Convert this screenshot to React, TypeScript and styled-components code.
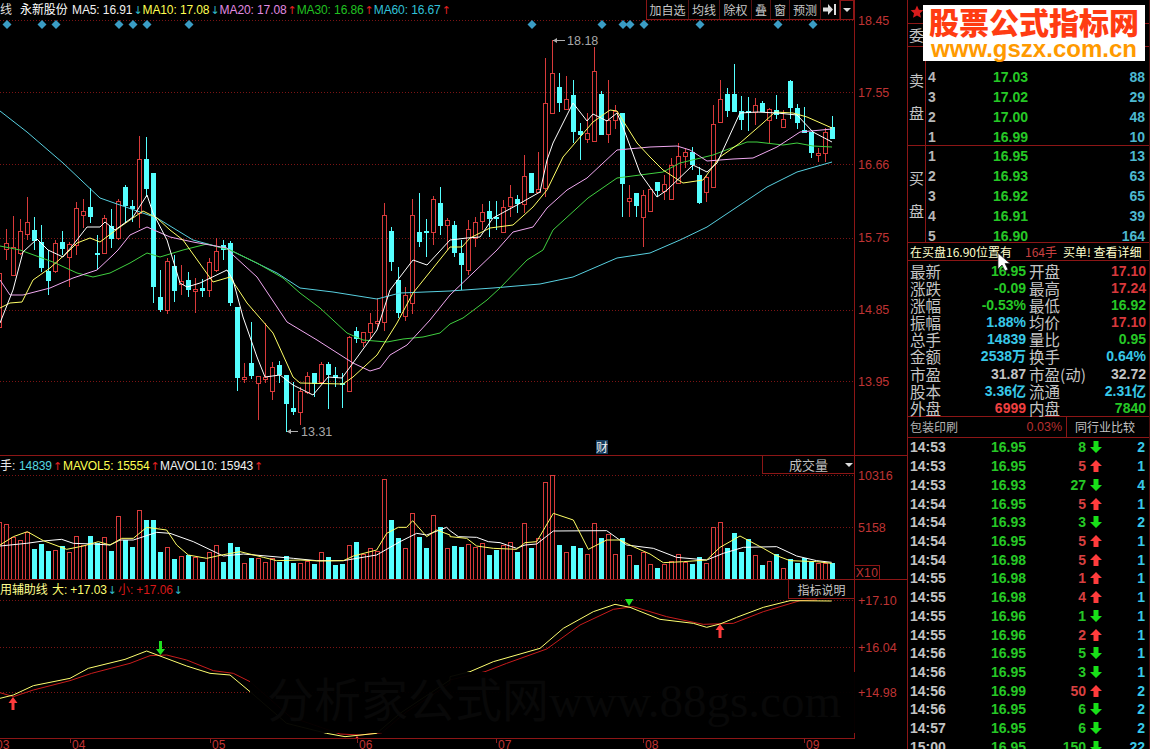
import React from "react";
import styled, { createGlobalStyle } from "styled-components";

const CJK = `"Noto Sans CJK SC", "Liberation Sans", sans-serif`;
const LATIN = `"Liberation Sans", "Noto Sans CJK SC", sans-serif`;
const LINE = "#8c1616";
const RED = "#d8383c";
const GREEN = "#26c826";
const CYAN = "#38c8e8";
const TEAL = "#4db8d0";
const GREY = "#c4c4c4";
const CANDLE_CYAN = "#55ffff";
const CANDLE_RED = "#d83a3a";

type Kind = "r" | "c";
type Candle = [Kind, number, number, number, number];

/* index -1 … 118, pixel y of high, body top, body bottom, low */
const candles: Candle[] = [
  ["r", 250, 273, 327, 330], ["r", 229, 243, 249, 260], ["r", 216, 247, 275, 276], ["r", 219, 231, 253, 255], ["r", 197, 222, 234, 240],
  ["c", 217, 230, 241, 250], ["c", 225, 242, 268, 272], ["c", 250, 271, 281, 295], ["r", 240, 243, 271, 273], ["c", 231, 242, 249, 255],
  ["r", 242, 244, 257, 287], ["r", 202, 208, 245, 255], ["r", 199, 211, 215, 228], ["c", 188, 207, 217, 223], ["c", 235, 253, 254, 270],
  ["r", 215, 218, 253, 254], ["c", 209, 226, 239, 248], ["r", 199, 201, 238, 240], ["c", 185, 187, 206, 223], ["c", 200, 206, 209, 222],
  ["r", 136, 159, 213, 228], ["c", 137, 159, 189, 197], ["c", 173, 173, 287, 303], ["c", 270, 297, 310, 312], ["r", 258, 261, 310, 314],
  ["c", 255, 266, 291, 302], ["r", 265, 281, 284, 295], ["c", 272, 280, 290, 297], ["r", 278, 289, 291, 313], ["c", 279, 288, 291, 297],
  ["r", 258, 262, 290, 297], ["r", 238, 251, 270, 272], ["c", 240, 245, 250, 260], ["c", 241, 243, 303, 306], ["c", 307, 307, 378, 391],
  ["r", 363, 377, 379, 383], ["c", 322, 363, 376, 379], ["r", 376, 376, 383, 420], ["r", 323, 377, 379, 383], ["r", 362, 367, 391, 400],
  ["c", 361, 365, 375, 383], ["c", 375, 375, 404, 432], ["c", 382, 408, 412, 415], ["r", 387, 391, 412, 425], ["r", 372, 376, 392, 394],
  ["c", 373, 373, 384, 397], ["r", 362, 364, 382, 384], ["c", 362, 364, 375, 409], ["c", 367, 375, 378, 387], ["c", 373, 383, 385, 408],
  ["r", 336, 337, 391, 391], ["c", 327, 331, 339, 343], ["r", 332, 332, 342, 347], ["r", 313, 323, 332, 339], ["r", 298, 321, 323, 328],
  ["r", 203, 215, 322, 331], ["c", 227, 231, 262, 271], ["c", 267, 280, 313, 318], ["r", 287, 295, 316, 321], ["r", 199, 215, 303, 314],
  ["c", 193, 232, 242, 247], ["c", 219, 231, 233, 257], ["r", 196, 199, 232, 245], ["c", 187, 203, 226, 235], ["r", 218, 220, 225, 250],
  ["c", 221, 225, 253, 257], ["c", 240, 253, 265, 290], ["r", 220, 229, 270, 275], ["r", 217, 222, 238, 247], ["r", 204, 212, 221, 230],
  ["c", 201, 211, 219, 237], ["c", 201, 217, 219, 230], ["r", 200, 207, 232, 232], ["r", 185, 197, 206, 217], ["c", 195, 199, 204, 213],
  ["r", 155, 176, 204, 213], ["c", 173, 173, 193, 193], ["r", 152, 189, 192, 192], ["r", 58, 103, 188, 197], ["r", 40, 73, 113, 113],
  ["c", 73, 87, 103, 112], ["r", 76, 99, 109, 109], ["c", 80, 95, 132, 143], ["c", 123, 131, 135, 160], ["r", 113, 133, 139, 143],
  ["r", 47, 71, 141, 141], ["c", 91, 94, 135, 135], ["r", 80, 120, 134, 143], ["r", 105, 111, 120, 129], ["c", 113, 113, 184, 217],
  ["r", 185, 198, 201, 217], ["c", 193, 193, 206, 217], ["r", 190, 195, 217, 247], ["r", 188, 189, 211, 211], ["c", 182, 182, 191, 197],
  ["r", 175, 184, 191, 200], ["r", 158, 165, 199, 199], ["r", 143, 156, 183, 183], ["r", 148, 152, 156, 168], ["c", 147, 152, 165, 170],
  ["c", 167, 175, 203, 204], ["r", 175, 177, 192, 202], ["r", 105, 124, 187, 187], ["r", 80, 99, 122, 122], ["c", 88, 94, 111, 117],
  ["c", 64, 94, 112, 112], ["c", 96, 111, 120, 130], ["c", 97, 111, 113, 131], ["r", 98, 105, 112, 125], ["c", 101, 103, 112, 112],
  ["r", 108, 109, 120, 143], ["c", 95, 110, 115, 119], ["r", 110, 119, 127, 127], ["c", 80, 81, 108, 119], ["c", 104, 108, 123, 129],
  ["c", 107, 130, 133, 133], ["c", 132, 132, 153, 158], ["r", 148, 153, 155, 162], ["r", 128, 132, 153, 162], ["c", 116, 127, 139, 139],
];

const volumeTops: number[] = [
  157, 163, 200, 210, 187, 237, 222, 243, 241, 228, 246, 199, 225, 198, 218, 202, 243, 139, 210, 231,
  121, 150, 150, 246, 232, 267, 259, 255, 262, 276, 247, 226, 276, 219, 231, 280, 264, 264, 276, 265,
  276, 258, 279, 280, 274, 282, 247, 261, 285, 282, 226, 216, 253, 235, 243, 28, 150, 204, 235, 129,
  201, 234, 136, 171, 235, 228, 231, 222, 230, 220, 255, 240, 224, 217, 245, 160, 234, 205, 37, 15,
  225, 246, 228, 234, 252, 160, 204, 192, 252, 204, 255, 285, 246, 282, 294, 282, 272, 253, 276, 282,
  261, 279, 172, 157, 234, 189, 246, 208, 255, 285, 273, 252, 294, 267, 279, 264, 276, 279, 279, 279,
];

const pts = (list: number[][]) => list.map(([x, y]) => `${x},${y}`).join(" ");
const zoomed = (ox: number, oy: number, list: number[][]) => list.map(([x, y]) => [ox + x / 3, oy + y / 3]);

const ma5 = [[0,323],[13,290],[23,252],[37,239],[48,250],[63,257],[73,245],[87,227],[100,227],[105,222],[115,230],[133,217],[147,195],[153,213],[167,240],[170,250],[180,283],[187,287],[200,283],[227,270],[233,280],[243,317],[257,357],[265,377],[280,375],[293,385],[313,395],[328,377],[342,378],[353,363],[377,330],[390,290],[413,260],[427,265],[450,240],[467,238],[480,237],[493,218],[517,205],[540,192],[547,160],[553,143],[573,103],[587,121],[593,114],[607,121],[617,113],[623,127],[640,173],[657,197],[667,190],[693,165],[707,172],[717,163],[740,113],[757,112],[777,113],[797,115],[813,132],[832,142]];
const ma10 = [[0,308],[10,303],[22,302],[33,280],[50,268],[70,250],[77,243],[90,238],[100,242],[120,227],[143,211],[157,218],[170,230],[183,240],[213,282],[230,277],[247,303],[273,333],[293,377],[300,383],[343,384],[353,377],[377,355],[397,323],[413,293],[450,247],[462,247],[470,238],[490,228],[513,225],[533,207],[547,190],[563,157],[593,122],[610,110],[617,111],[637,143],[650,157],[663,170],[683,183],[703,180],[720,157],[740,143],[763,123],[775,112],[793,113],[807,117],[832,128]];
const ma20 = [[0,280],[10,295],[23,295],[50,288],[73,278],[97,270],[113,255],[118,250],[130,235],[147,227],[170,237],[193,242],[227,248],[233,255],[257,277],[287,322],[317,340],[353,363],[370,371],[380,368],[390,355],[407,345],[430,320],[450,295],[497,250],[513,232],[533,227],[547,208],[567,190],[587,178],[617,150],[650,147],[677,146],[690,150],[707,161],[733,159],[753,158],[777,147],[800,132],[832,129]];
const ma30 = [[0,246],[20,250],[53,262],[77,273],[93,277],[110,273],[130,263],[147,253],[160,257],[183,250],[207,244],[230,250],[257,263],[283,278],[300,293],[320,308],[347,333],[363,340],[387,342],[403,339],[423,337],[440,333],[450,324],[463,318],[487,300],[500,288],[527,260],[543,250],[553,230],[588,198],[617,178],[663,172],[680,163],[713,155],[747,142],[757,142],[783,145],[797,143],[813,146],[832,147]];
const ma60 = [[0,111],[27,132],[63,163],[100,198],[157,218],[193,240],[230,250],[277,273],[300,288],[333,292],[377,299],[400,293],[450,291],[493,288],[540,284],[573,277],[617,258],[650,253],[680,240],[707,227],[767,187],[797,172],[832,162]];

const volYellow = [
  ...zoomed(0, 470, [[0,225],[40,200],[82,185],[130,212],[200,238],[250,228],[295,215],[330,225],[365,205],[400,205],[440,172],[500,180],[530,225],[565,255],[620,265],[665,255],[720,245],[790,262],[830,272],[900,270],[960,273],[1030,272],[1060,258],[1130,240],[1160,190],[1195,172],[1220,172],[1238,152],[1280,200],[1310,180],[1350,195]]),
  ...zoomed(450, 470, [[0,200],[50,205],[80,228],[130,235],[200,238],[225,218],[260,215],[310,130],[370,150],[415,238],[470,210],[510,210],[550,230],[600,252],[640,278],[700,275],[770,270],[810,232],[870,198],[940,235],[975,255],[1020,272],[1100,275],[1145,280]]),
];
const volWhite = [
  ...zoomed(0, 470, [[0,228],[80,220],[130,213],[185,208],[220,220],[280,222],[330,225],[360,210],[400,210],[470,187],[510,190],[580,215],[670,258],[730,252],[880,265],[950,272],[1030,272],[1100,260],[1130,255],[1200,215],[1250,190],[1280,195],[1340,172]]),
  ...zoomed(450, 470, [[0,182],[25,200],[80,202],[115,215],[150,218],[200,235],[225,225],[260,222],[310,183],[470,182],[530,225],[610,235],[680,262],[770,270],[820,250],[880,232],[980,230],[1040,258],[1100,272],[1145,277]]),
];
const indYellow = [
  ...zoomed(0, 580, [[0,355],[40,345],[100,317],[210,295],[265,265],[375,238],[440,213],[480,228],[560,258],[630,280],[690,285],[750,335],[860,430],[980,460],[1035,470],[1130,460],[1200,400],[1350,300]]),
  ...zoomed(450, 580, [[0,290],[60,275],[130,245],[270,205],[340,145],[430,95],[495,73],[540,82],[630,118],[730,130],[770,142],[810,132],[860,112],[940,82],[1020,62],[1145,63]]),
];
const indRed = [
  ...zoomed(0, 580, [[0,338],[40,350],[100,330],[210,302],[275,280],[390,250],[450,227],[500,225],[560,240],[640,272],[700,280],[750,305],[870,410],[1020,462],[1080,465],[1145,458],[1220,395],[1350,310]]),
  ...zoomed(450, 580, [[0,300],[105,275],[170,250],[290,207],[390,135],[490,88],[550,80],[650,110],[760,133],[850,130],[940,95],[1050,62],[1100,60]]),
];

const diamonds = [7, 42, 56, 119, 133, 147, 189, 532, 602, 623, 630, 644, 700, 778, 813];

const GlobalStyle = createGlobalStyle`
  html, body { margin: 0; padding: 0; background: #000; }
  * { box-sizing: border-box; }
`;

const Screen = styled.div`
  display: flex;
  width: 1150px;
  height: 749px;
  overflow: hidden;
  background: #000;
  font-family: ${CJK};
  color: ${GREY};
`;

const ChartColumn = styled.section`
  position: relative;
  display: flex;
  flex-direction: column;
  flex: 0 0 907px;
`;

const Pane = styled.div<{ $h: number; $line?: boolean }>`
  display: flex;
  height: ${(p) => p.$h}px;
  flex: 0 0 auto;
  border-bottom: ${(p) => (p.$line ? `1px solid ${LINE}` : "none")};
`;

const Plot = styled.div<{ $line?: boolean }>`
  position: relative;
  flex: 0 0 854px;
  overflow: hidden;
  border-bottom: ${(p) => (p.$line ? `1px solid ${LINE}` : "none")};
`;

const Drawing = styled.svg`
  display: block;
  width: 854px;
  height: 100%;
`;

const Axis = styled.div<{ $pad: number }>`
  display: flex;
  flex-direction: column;
  flex: 0 0 53px;
  padding-top: ${(p) => p.$pad}px;
  border-left: 1px solid ${LINE};
`;

const AxisLabel = styled.div<{ $step: number }>`
  height: ${(p) => p.$step}px;
  padding-left: 3px;
  font: 12.5px/18px ${LATIN};
  color: #bf3434;
`;

const ScaleBox = styled.div`
  margin-top: auto;
  width: 25px;
  height: 14px;
  border: 1px solid ${LINE};
  border-bottom: none;
  border-left: none;
  font: 12px/14px ${LATIN};
  letter-spacing: 0.4px;
  color: #bf3434;
  text-align: center;
`;

const Legend = styled.div`
  position: absolute;
  top: 0;
  left: 0;
  display: flex;
  height: 20px;
  align-items: center;
  font: 12px/20px ${LATIN};
  white-space: nowrap;
`;

const LegendItem = styled.span<{ $w: number; $c: string }>`
  flex: 0 0 ${(p) => p.$w}px;
  color: ${(p) => p.$c};
  letter-spacing: -0.1px;
`;

const Trend = styled.span<{ $up: boolean }>`
  margin-left: 1px;
  color: ${(p) => (p.$up ? "#e02020" : "#30b8c8")};
  font-family: "DejaVu Sans", sans-serif;
  font-size: 11px;
`;

const Toolbar = styled.div`
  position: absolute;
  top: 0;
  right: 0;
  display: grid;
  grid-template-columns: 42px 31px 32px 19px 19px 31px 19px 14px;
  height: 20px;
  border-left: 1px solid ${LINE};
  border-bottom: 1px solid ${LINE};
  background: #000;
`;

const ToolButton = styled.div`
  display: flex;
  align-items: center;
  justify-content: center;
  border-right: 1px solid #551010;
  font-size: 12px;
  line-height: 19px;
  color: #c6c6c6;
  white-space: nowrap;
`;

const ToolDrop = styled(ToolButton)`
  border: 1px solid ${LINE};
  border-bottom: none;
`;

const Caret = styled.i`
  display: block;
  width: 0;
  height: 0;
  border-left: 4px solid transparent;
  border-right: 4px solid transparent;
  border-top: 4px solid #ddd;
`;

const EventFlag = styled.span`
  position: absolute;
  left: 596px;
  top: 440px;
  width: 12px;
  height: 14px;
  background: #143a5c;
  color: #eee;
  font-size: 12px;
  line-height: 14px;
  text-align: center;
`;

const VolumeSelect = styled.div`
  position: absolute;
  top: 0;
  right: 0;
  display: flex;
  align-items: center;
  width: 92px;
  height: 18px;
  padding-left: 26px;
  gap: 17px;
  border-left: 1px solid ${LINE};
  border-bottom: 1px solid ${LINE};
  background: #000;
  font-size: 13px;
  color: #c0c0c0;
`;

const IndicatorHelp = styled.div`
  position: absolute;
  top: 0;
  right: 0;
  width: 66px;
  height: 19px;
  border-left: 1px solid ${LINE};
  border-bottom: 1px solid ${LINE};
  background: #000;
  font-size: 12px;
  line-height: 19px;
  text-align: center;
  color: #c6c6c6;
`;

const DateAxis = styled.div`
  display: flex;
  height: 10px;
  margin-left: -6px;
  overflow: hidden;
`;

const DateTick = styled.span<{ $w: number }>`
  flex: 0 0 ${(p) => p.$w}px;
  padding-left: 2px;
  background: linear-gradient(#8a2020, #8a2020) no-repeat 0 0 / 1px 4px;
  font: 12px/13px ${LATIN};
  color: #c23434;
`;

const WatermarkVeil = styled.div`
  position: absolute;
  left: 250px;
  top: 672px;
  width: 605px;
  height: 61px;
  overflow: hidden;
  padding-left: 17px;
  background: rgba(0, 0, 0, 0.96);
  font: 47px/58px "Liberation Serif", "Noto Sans CJK SC", serif;
  color: #080808;
  white-space: nowrap;
`;

const PriceMark = styled.text`
  font: 12.5px ${LATIN};
  fill: #a8a8a8;
`;

const SidePanel = styled.aside`
  position: relative;
  display: flex;
  flex-direction: column;
  flex: 1;
  border-left: 1px solid ${LINE};
  border-right: 1px solid #4a0c0c;
  & > * {
    flex-shrink: 0;
  }
`;

const StarRow = styled.div`
  display: flex;
  align-items: center;
  height: 24px;
  padding-left: 2px;
  border-bottom: 1px solid ${LINE};
`;

const Logo = styled.div`
  position: absolute;
  top: 5px;
  left: 15px;
  display: flex;
  flex-direction: column;
  align-items: center;
  width: 222px;
  height: 56px;
  background: #fff;
`;

const LogoTitle = styled.div`
  font: 900 30px/33px ${CJK};
  color: #ff3c12;
  white-space: nowrap;
`;

const LogoUrl = styled.div`
  font: 700 24px/22px ${LATIN};
  color: #ff9a00;
  white-space: nowrap;
`;

const CommitteeRow = styled.div`
  display: flex;
  height: 23px;
  border-bottom: 1px solid ${LINE};
`;

const SideCell = styled.div`
  flex: 0 0 18px;
  border-right: 1px solid ${LINE};
  font-size: 15px;
  line-height: 22px;
  text-align: center;
  color: ${GREY};
`;

const Book = styled.div<{ $h: number }>`
  display: flex;
  height: ${(p) => p.$h}px;
  border-bottom: 1px solid ${LINE};
`;

const BookSide = styled(SideCell)`
  display: flex;
  flex-direction: column;
  align-items: center;
  justify-content: center;
  gap: 16px;
  line-height: 17px;
`;

const BookRows = styled.div`
  flex: 1;
  display: flex;
  flex-direction: column;
`;

const BookRow = styled.div`
  display: grid;
  grid-template-columns: 65px 36px 1fr;
  flex: 0 0 20px;
  padding: 0 4px 0 2px;
  font: 700 14px/20px ${LATIN};
  white-space: nowrap;
`;

const Mono = styled.span<{ $c: string; $right?: boolean }>`
  color: ${(p) => p.$c};
  text-align: ${(p) => (p.$right ? "right" : "left")};
`;

const Notice = styled.div`
  position: relative;
  display: flex;
  height: 18px;
  padding-left: 2px;
  border-bottom: 1px solid ${LINE};
  background: #000;
  font-size: 12px;
  line-height: 18px;
  white-space: nowrap;
`;

const NoticePart = styled.span<{ $w: number; $c: string }>`
  flex: 0 0 ${(p) => p.$w}px;
  color: ${(p) => p.$c};
`;

const Pointer = styled.svg`
  position: absolute;
  left: 89px;
  top: 252px;
`;

const Quotes = styled.div`
  display: flex;
  flex-direction: column;
  height: 156px;
  padding-top: 2px;
  border-bottom: 1px solid ${LINE};
`;

const QuoteRow = styled.div`
  display: flex;
  flex: 0 0 17.1px;
  padding-left: 2px;
`;

const QuoteCell = styled.div<{ $w: number; $inset?: number }>`
  display: flex;
  flex: 0 0 ${(p) => p.$w}px;
  justify-content: space-between;
  padding-left: ${(p) => p.$inset ?? 0}px;
  white-space: nowrap;
`;

const QuoteLabel = styled.span`
  font-size: 15.5px;
  line-height: 17px;
  color: ${GREY};
`;

const QuoteValue = styled.span<{ $c: string }>`
  font: 700 14px/17px ${LATIN};
  color: ${(p) => p.$c};
`;

const IndustryRow = styled.div`
  display: flex;
  height: 21px;
  border-bottom: 1px solid ${LINE};
  font-size: 12px;
  line-height: 20px;
`;

const IndustryCell = styled.div`
  display: flex;
  flex: 0 0 159px;
  justify-content: space-between;
  padding: 0 4px 0 2px;
  border-right: 1px solid ${LINE};
  color: #b4b4b4;
`;

const IndustryChange = styled.span`
  font: 12.5px/20px ${LATIN};
  color: #b83030;
`;

const CompareLink = styled.div`
  flex: 1;
  padding-left: 8px;
  color: #c4c4c4;
`;

const TickList = styled.div`
  display: flex;
  flex-direction: column;
`;

const TickRow = styled.div`
  display: grid;
  grid-template-columns: 81px 36px 59px 20px 1fr;
  align-items: center;
  flex: 0 0 18.72px;
  padding: 0 4px 0 2px;
  font: 700 14px/18px ${LATIN};
  white-space: nowrap;
`;

const TickArrow = styled.svg`
  display: block;
  margin: 0 auto;
`;

const Line = ({ points, color, w = 1 }: { points: number[][]; color: string; w?: number }) => (
  <polyline points={pts(points)} fill="none" stroke={color} strokeWidth={w} />
);

const Grid = ({ ys }: { ys: number[] }) => (
  <g stroke="#7c1414" strokeWidth="1" strokeDasharray="1 2" shapeRendering="crispEdges">
    {ys.map((y) => (
      <line key={y} x1="0" x2="854" y1={y} y2={y} />
    ))}
  </g>
);

const centerX = (index: number) => 6 + 7 * index + 0.5;

const CandleShape = ({ candle, index }: { candle: Candle; index: number }) => {
  const [kind, hi, top, bot, lo] = candle;
  const x = centerX(index);
  const color = kind === "r" ? CANDLE_RED : CANDLE_CYAN;
  return (
    <g shapeRendering="crispEdges">
      <line x1={x} x2={x} y1={hi} y2={lo} stroke={color} />
      {kind === "r" ? (
        <rect x={x - 2} y={top + 0.5} width={4} height={Math.max(bot - top, 1)} fill="#000" stroke={color} />
      ) : (
        <rect x={x - 2.5} y={top} width={5} height={Math.max(bot - top, 2)} fill={color} />
      )}
    </g>
  );
};

const VolumeBar = ({ top, kind, index }: { top: number; kind: Kind; index: number }) => {
  const x = centerX(index);
  const y = 470 + top / 3;
  return kind === "r" ? (
    <rect x={x - 2} y={Math.round(y) + 0.5} width={4} height={579 - Math.round(y)} fill="#000" stroke={CANDLE_RED} shapeRendering="crispEdges" />
  ) : (
    <rect x={x - 2.5} y={y} width={5} height={579.5 - y} fill={CANDLE_CYAN} shapeRendering="crispEdges" />
  );
};

const SignalArrow = ({ x, y, h, color, down }: { x: number; y: number; h: number; color: string; down?: boolean }) => {
  const tip = down ? y + h : y;
  const back = down ? tip - 6 : tip + 6;
  const tail = down ? y : y + h;
  return <polygon points={`${x},${tip} ${x + 4.5},${back} ${x + 1.5},${back} ${x + 1.5},${tail} ${x - 1.5},${tail} ${x - 1.5},${back} ${x - 4.5},${back}`} fill={color} />;
};

const MainChart = () => (
  <Drawing viewBox="0 0 854 455" preserveAspectRatio="none">
    <Grid ys={[20.5, 92.5, 164.5, 238, 310, 381.5]} />
    {diamonds.map((x) => (
      <polygon key={x} points={`${x},20 ${x + 4.5},24.5 ${x},29 ${x - 4.5},24.5`} fill="#3a9cc4" />
    ))}
    {candles.map((c, i) => (
      <CandleShape key={i} candle={c} index={i - 1} />
    ))}
    <Line points={ma60} color="#58d0e0" />
    <Line points={ma30} color="#40d040" />
    <Line points={ma20} color="#f0a8f0" />
    <Line points={ma10} color="#ffff66" />
    <Line points={ma5} color="#ffffff" />
    <g stroke="#b0b0b0" fill="#b0b0b0">
      <line x1="553" x2="565" y1="40.5" y2="40.5" />
      <polygon points="553,40.5 557,38 557,43" stroke="none" />
      <line x1="287" x2="298" y1="431.5" y2="431.5" />
      <polygon points="287,431.5 291,429 291,434" stroke="none" />
    </g>
    <PriceMark x="567" y="45">18.18</PriceMark>
    <PriceMark x="301" y="436">13.31</PriceMark>
  </Drawing>
);

const VolumeChart = () => (
  <Drawing viewBox="0 456 854 123" preserveAspectRatio="none">
    <Grid ys={[475, 527]} />
    {volumeTops.map((t, i) => (
      <VolumeBar key={i} top={t} kind={candles[i][0]} index={i - 1} />
    ))}
    <Line points={volWhite} color="#ffffff" />
    <Line points={volYellow} color="#ffff66" />
  </Drawing>
);

const IndicatorChart = () => (
  <Drawing viewBox="0 580 854 158" preserveAspectRatio="none">
    <Grid ys={[600.5, 647, 692.5]} />
    <Line points={indRed} color="#c81c1c" />
    <Line points={indYellow} color="#ffff70" />
    <SignalArrow x={13} y={697} h={13} color="#ff3c3c" />
    <SignalArrow x={160.5} y={641} h={14} color="#20e020" down />
    <SignalArrow x={720} y={624} h={14} color="#ff3c3c" />
    <SignalArrow x={357} y={736} h={13} color="#ff3c3c" />
    <polygon points="625,599 633.5,599 629,606" fill="#20e020" />
  </Drawing>
);

const sell = [
  ["", "", ""],
  ["4", "17.03", "88"],
  ["3", "17.02", "29"],
  ["2", "17.00", "48"],
  ["1", "16.99", "10"],
];
const buy = [
  ["1", "16.95", "13"],
  ["2", "16.93", "63"],
  ["3", "16.92", "65"],
  ["4", "16.91", "39"],
  ["5", "16.90", "164"],
];

const quotes: [string, string, string, string, string, string][] = [
  ["最新", "16.95", GREEN, "开盘", "17.10", RED],
  ["涨跌", "-0.09", GREEN, "最高", "17.24", RED],
  ["涨幅", "-0.53%", GREEN, "最低", "16.92", GREEN],
  ["振幅", "1.88%", CYAN, "均价", "17.10", RED],
  ["总手", "14839", CYAN, "量比", "0.95", GREEN],
  ["金额", "2538万", CYAN, "换手", "0.64%", CYAN],
  ["市盈", "31.87", GREY, "市盈(动)", "32.72", GREY],
  ["股本", "3.36亿", CYAN, "流通", "2.31亿", CYAN],
  ["外盘", "6999", "#f04040", "内盘", "7840", GREEN],
];

const ticks: [string, string, string, boolean, string][] = [
  ["14:53", "16.95", "8", false, "2"],
  ["14:53", "16.95", "5", true, "1"],
  ["14:53", "16.93", "27", false, "4"],
  ["14:54", "16.95", "5", true, "1"],
  ["14:54", "16.93", "3", false, "2"],
  ["14:54", "16.95", "5", true, "1"],
  ["14:54", "16.98", "5", true, "1"],
  ["14:55", "16.98", "1", true, "1"],
  ["14:55", "16.98", "4", true, "1"],
  ["14:55", "16.96", "1", false, "1"],
  ["14:55", "16.96", "2", true, "1"],
  ["14:56", "16.95", "5", false, "1"],
  ["14:56", "16.95", "3", false, "1"],
  ["14:56", "16.99", "50", true, "2"],
  ["14:56", "16.95", "6", false, "2"],
  ["14:57", "16.95", "6", false, "2"],
  ["15:00", "16.95", "150", false, "22"],
];

const BookLine = ({ row }: { row: string[] }) => (
  <BookRow>
    <Mono $c="#b8b8b8">{row[0]}</Mono>
    <Mono $c={GREEN}>{row[1]}</Mono>
    <Mono $c={TEAL} $right>{row[2]}</Mono>
  </BookRow>
);

const App = () => (
  <Screen>
    <GlobalStyle />
    <ChartColumn>
      <Pane $h={456} $line>
        <Plot>
          <MainChart />
          <Legend>
            <LegendItem $w={20} $c="#ddd">线</LegendItem>
            <LegendItem $w={52} $c="#fff">永新股份</LegendItem>
            <LegendItem $w={70} $c="#f0f0f0">MA5: 16.91<Trend $up={false}>↓</Trend></LegendItem>
            <LegendItem $w={77} $c="#ffff50">MA10: 17.08<Trend $up={false}>↓</Trend></LegendItem>
            <LegendItem $w={77} $c="#e08ae0">MA20: 17.08<Trend $up>↑</Trend></LegendItem>
            <LegendItem $w={77} $c="#20c020">MA30: 16.86<Trend $up>↑</Trend></LegendItem>
            <LegendItem $w={77} $c="#30c0d8">MA60: 16.67<Trend $up>↑</Trend></LegendItem>
          </Legend>
          <Toolbar>
            <ToolButton>加自选</ToolButton>
            <ToolButton>均线</ToolButton>
            <ToolButton>除权</ToolButton>
            <ToolButton>叠</ToolButton>
            <ToolButton>窗</ToolButton>
            <ToolButton>预测</ToolButton>
            <ToolButton>
              <svg width="14" height="11" viewBox="0 0 14 11">
                <path d="M0 3.5h5V0l5 5.5-5 5.5V7.5H0z" fill="#ddd" />
                <rect x="11" y="0" width="2" height="11" fill="#ddd" />
              </svg>
            </ToolButton>
            <ToolDrop><Caret /></ToolDrop>
          </Toolbar>
          <EventFlag>财</EventFlag>
        </Plot>
        <Axis $pad={12}>
          {["18.45", "17.55", "16.66", "15.75", "14.85", "13.95"].map((v) => (
            <AxisLabel key={v} $step={72.2}>{v}</AxisLabel>
          ))}
        </Axis>
      </Pane>
      <Pane $h={124} $line>
        <Plot>
          <VolumeChart />
          <Legend>
            <LegendItem $w={19} $c="#e8e8e8">手:</LegendItem>
            <LegendItem $w={44} $c="#55d8e0">14839<Trend $up>↑</Trend></LegendItem>
            <LegendItem $w={97} $c="#ffff50">MAVOL5: 15554<Trend $up>↑</Trend></LegendItem>
            <LegendItem $w={110} $c="#f0f0f0">MAVOL10: 15943<Trend $up>↑</Trend></LegendItem>
          </Legend>
          <VolumeSelect>成交量<Caret /></VolumeSelect>
        </Plot>
        <Axis $pad={11}>
          <AxisLabel $step={52}>10316</AxisLabel>
          <AxisLabel $step={40}>5158</AxisLabel>
          <ScaleBox>X10</ScaleBox>
        </Axis>
      </Pane>
      <Pane $h={159}>
        <Plot $line>
          <IndicatorChart />
          <Legend>
            <LegendItem $w={52} $c="#ffff90">用辅助线</LegendItem>
            <LegendItem $w={66} $c="#ffff70">大: +17.03<Trend $up={false}>↓</Trend></LegendItem>
            <LegendItem $w={70} $c="#d81818">小: +17.06<Trend $up={false}>↓</Trend></LegendItem>
          </Legend>
          <IndicatorHelp>指标说明</IndicatorHelp>
        </Plot>
        <Axis $pad={12}>
          <AxisLabel $step={46.5}>+17.10</AxisLabel>
          <AxisLabel $step={45.5}>+16.04</AxisLabel>
          <AxisLabel $step={20}>+14.98</AxisLabel>
        </Axis>
      </Pane>
      <DateAxis>
        <DateTick $w={76}>03</DateTick>
        <DateTick $w={140}>04</DateTick>
        <DateTick $w={147}>05</DateTick>
        <DateTick $w={139}>06</DateTick>
        <DateTick $w={147}>07</DateTick>
        <DateTick $w={161}>08</DateTick>
        <DateTick $w={50}>09</DateTick>
      </DateAxis>
      <WatermarkVeil>分析家公式网www.88gs.com</WatermarkVeil>
    </ChartColumn>
    <SidePanel>
      <StarRow>
        <svg width="14" height="14" viewBox="0 0 24 24">
          <path d="M12 1l3.2 7.3 7.8.7-5.9 5.2 1.8 7.8L12 18l-6.9 4 1.8-7.8L1 9l7.8-.7z" fill="#d81c1c" />
        </svg>
      </StarRow>
      <Logo>
        <LogoTitle>股票公式指标网</LogoTitle>
        <LogoUrl>www.gszx.com.cn</LogoUrl>
      </Logo>
      <CommitteeRow>
        <SideCell>委</SideCell>
      </CommitteeRow>
      <Book $h={99}>
        <BookSide><span>卖</span><span>盘</span></BookSide>
        <BookRows>
          {sell.map((r, i) => <BookLine key={i} row={r} />)}
        </BookRows>
      </Book>
      <Book $h={97}>
        <BookSide><span>买</span><span>盘</span></BookSide>
        <BookRows>
          {buy.map((r) => <BookLine key={r[0]} row={r} />)}
        </BookRows>
      </Book>
      <Notice>
        <NoticePart $w={115} $c="#ffffcc">在买盘16.90位置有</NoticePart>
        <NoticePart $w={38} $c="#c84040">164手</NoticePart>
        <NoticePart $w={86} $c="#ffffcc">买单! 查看详细</NoticePart>
      </Notice>
      <Pointer width="14" height="20" viewBox="0 0 14 20">
        <path d="M1 1v16l4-4 3 6 3-1.5-3-6h5z" fill="#fff" stroke="#222" strokeWidth="0.7" />
      </Pointer>
      <Quotes>
        {quotes.map((q) => (
          <QuoteRow key={q[0]}>
            <QuoteCell $w={116}>
              <QuoteLabel>{q[0]}</QuoteLabel>
              <QuoteValue $c={q[2]}>{q[1]}</QuoteValue>
            </QuoteCell>
            <QuoteCell $w={120} $inset={3}>
              <QuoteLabel>{q[3]}</QuoteLabel>
              <QuoteValue $c={q[5]}>{q[4]}</QuoteValue>
            </QuoteCell>
          </QuoteRow>
        ))}
      </Quotes>
      <IndustryRow>
        <IndustryCell>
          包装印刷
          <IndustryChange>0.03%</IndustryChange>
        </IndustryCell>
        <CompareLink>同行业比较</CompareLink>
      </IndustryRow>
      <TickList>
        {ticks.map((t, i) => (
          <TickRow key={i}>
            <Mono $c={GREY}>{t[0]}</Mono>
            <Mono $c={GREEN}>{t[1]}</Mono>
            <Mono $c={t[3] ? "#d84040" : GREEN} $right>{t[2]}</Mono>
            <TickArrow width="12" height="12" viewBox="0 0 12 12">
              <polygon
                points={t[3] ? "6,0 12,6 8.5,6 8.5,12 3.5,12 3.5,6 0,6" : "6,12 12,6 8.5,6 8.5,0 3.5,0 3.5,6 0,6"}
                fill={t[3] ? "#ff3c3c" : "#18e018"}
              />
            </TickArrow>
            <Mono $c={CYAN} $right>{t[4]}</Mono>
          </TickRow>
        ))}
      </TickList>
    </SidePanel>
  </Screen>
);

export default App;
